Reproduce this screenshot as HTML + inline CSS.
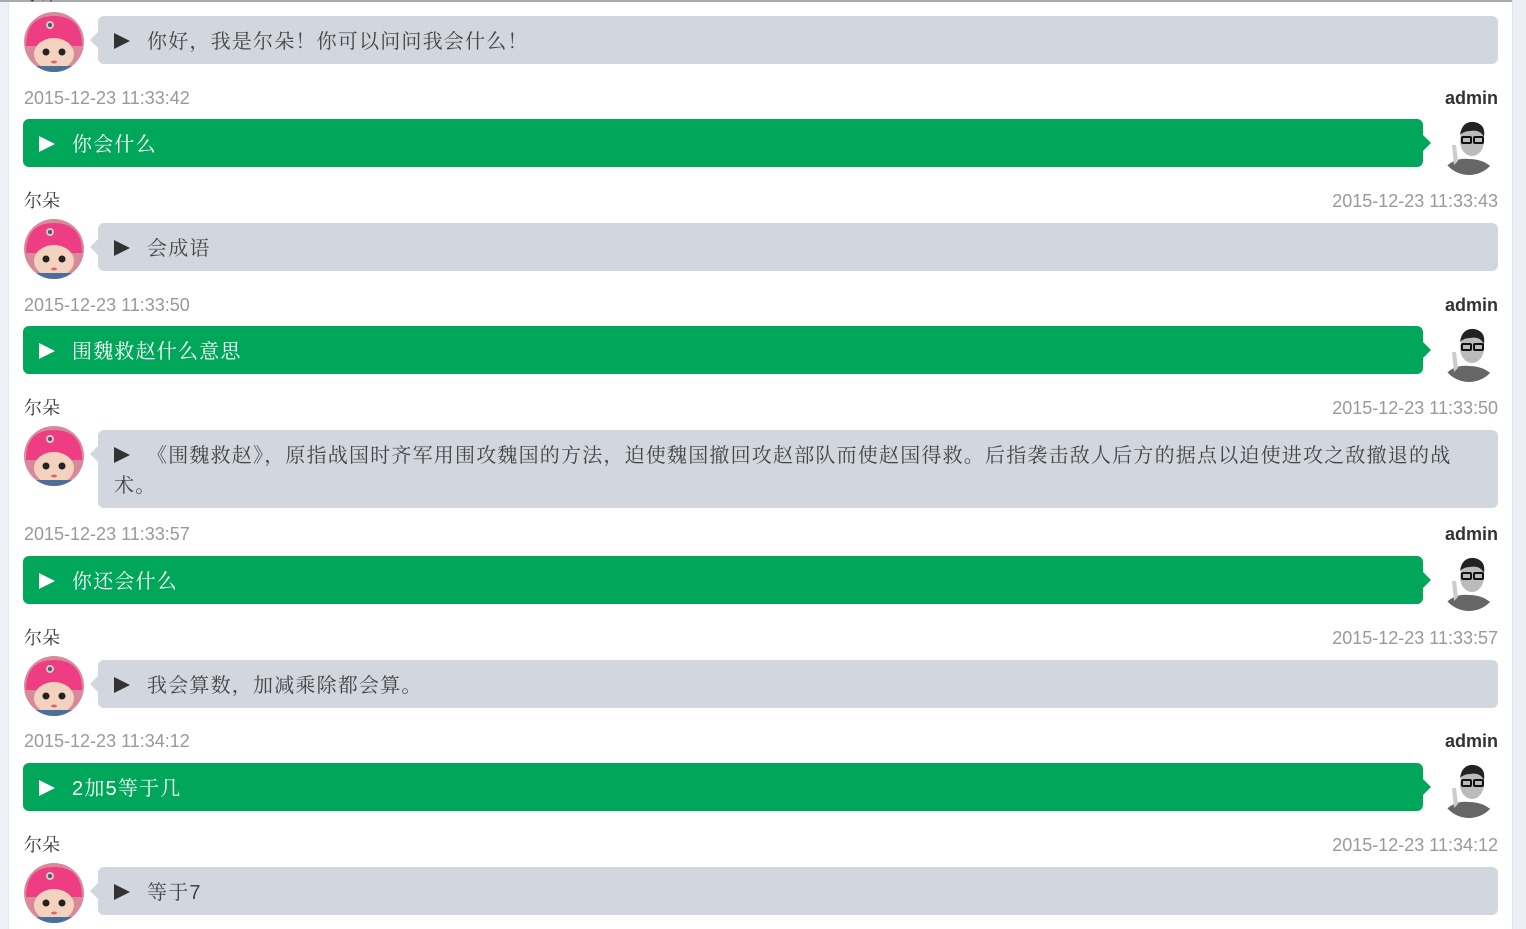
<!DOCTYPE html>
<html><head><meta charset="utf-8"><style>
*{margin:0;padding:0;box-sizing:border-box}
body{width:1526px;height:929px;overflow:hidden;background:#fff;position:relative;font-family:"Liberation Sans","Noto Serif CJK SC",serif}
.ls{position:absolute;left:0;top:0;width:9px;height:929px;background:#eef1f5;border-right:1px solid #e3e6ea}
.rs{position:absolute;left:1512px;top:0;width:14px;height:929px;background:#ecf0f5;border-left:1px solid #e0e4e8}
.top{position:absolute;left:0;top:0;width:1512px;height:2px;background:#aaa}
.name{position:absolute;left:24px;font-size:18px;color:#333;font-family:"Liberation Serif","Noto Serif CJK SC",serif;line-height:20px}
.ts{position:absolute;font-size:18px;color:#999;font-family:"Liberation Sans",sans-serif;line-height:20px}
.adm{position:absolute;right:28px;font-size:18px;color:#333;font-weight:bold;font-family:"Liberation Sans",sans-serif;line-height:20px}
.bb{position:absolute;left:98px;width:1400px;background:#d2d6de;border-radius:6px;color:#444;font-size:20px;line-height:30px;padding:11px 16px 7px;white-space:nowrap;letter-spacing:1.2px}
.bb:before{content:"";position:absolute;left:-8px;top:16px;border:8px solid transparent;border-left:0;border-right-color:#d2d6de}
.gb{position:absolute;left:23px;width:1400px;height:48px;background:#00a65a;border-radius:6px;color:#fff;font-size:20px;line-height:30px;padding:11px 16px 7px;white-space:nowrap;letter-spacing:1.2px}
.gb:after{content:"";position:absolute;right:-8px;top:16px;border:8px solid transparent;border-right:0;border-left-color:#00a65a}
.tri{display:inline-block;width:0;height:0;border-top:8px solid transparent;border-bottom:8px solid transparent;border-left:16px solid currentColor;margin-right:17px;vertical-align:-1px}
.bb .tri{color:#333}
.av{position:absolute;left:24px;width:60px;height:60px}
.aa{position:absolute;left:1440px;width:58px;height:58px}
</style></head><body>
<div class="ls"></div><div class="rs"></div><div class="top"></div>

<svg width="0" height="0" style="position:absolute"><defs>
<symbol id="bot" viewBox="0 0 60 60"><clipPath id="c1"><circle cx="30" cy="30" r="30"/></clipPath><g clip-path="url(#c1)"><rect width="60" height="60" fill="#d98a9a"/><path d="M2 34 Q2 4 30 4 Q58 4 58 34 Z" fill="#ee3d83"/><circle cx="26" cy="13" r="4" fill="#ccc"/><circle cx="26" cy="13" r="2" fill="#555"/><ellipse cx="30" cy="42" rx="20" ry="16" fill="#f3d3bf"/><circle cx="22" cy="40" r="3.5" fill="#222"/><circle cx="38" cy="40" r="3.5" fill="#222"/><ellipse cx="30" cy="50" rx="3" ry="1.5" fill="#d66"/><rect x="10" y="54" width="40" height="8" fill="#4a6f9c"/></g></symbol>
<symbol id="adm" viewBox="0 0 58 58"><clipPath id="c2"><circle cx="29" cy="29" r="29"/></clipPath><g clip-path="url(#c2)"><rect width="58" height="58" fill="#fff"/><path d="M0 58 Q10 40 29 42 Q48 42 58 58Z" fill="#666"/><ellipse cx="32" cy="24" rx="12" ry="15" fill="#bbb"/><path d="M20 18 Q22 4 34 5 Q46 7 44 20 Q40 12 30 14 Q24 14 20 18Z" fill="#222"/><rect x="22" y="20" width="9" height="6" rx="1" fill="none" stroke="#111" stroke-width="2"/><rect x="34" y="20" width="9" height="6" rx="1" fill="none" stroke="#111" stroke-width="2"/><path d="M14 48 L12 28 L16 28 L18 44Z" fill="#ccc"/></g></symbol>
</defs></svg>

<div class="name" style="top:-16px">尔朵</div>
<svg class="av" style="top:12px"><use href="#bot"/></svg>
<div class="bb" style="top:16px;height:48px"><span class="tri"></span>你好，我是尔朵！你可以问问我会什么！</div>

<div class="ts" style="left:24px;top:88px">2015-12-23 11:33:42</div><div class="adm" style="top:88px">admin</div>
<div class="gb" style="top:119px"><span class="tri"></span>你会什么</div>
<svg class="aa" style="top:117px"><use href="#adm"/></svg>

<div class="name" style="top:191px">尔朵</div><div class="ts" style="right:28px;top:191px">2015-12-23 11:33:43</div>
<svg class="av" style="top:219px"><use href="#bot"/></svg>
<div class="bb" style="top:223px;height:48px"><span class="tri"></span>会成语</div>

<div class="ts" style="left:24px;top:295px">2015-12-23 11:33:50</div><div class="adm" style="top:295px">admin</div>
<div class="gb" style="top:326px"><span class="tri"></span>围魏救赵什么意思</div>
<svg class="aa" style="top:324px"><use href="#adm"/></svg>

<div class="name" style="top:398px">尔朵</div><div class="ts" style="right:28px;top:398px">2015-12-23 11:33:50</div>
<svg class="av" style="top:426px"><use href="#bot"/></svg>
<div class="bb" style="top:430px;height:78px"><span class="tri"></span>《围魏救赵》，原指战国时齐军用围攻魏国的方法，迫使魏国撤回攻赵部队而使赵国得救。后指袭击敌人后方的据点以迫使进攻之敌撤退的战<br>术。</div>

<div class="ts" style="left:24px;top:524px">2015-12-23 11:33:57</div><div class="adm" style="top:524px">admin</div>
<div class="gb" style="top:556px"><span class="tri"></span>你还会什么</div>
<svg class="aa" style="top:553px"><use href="#adm"/></svg>

<div class="name" style="top:628px">尔朵</div><div class="ts" style="right:28px;top:628px">2015-12-23 11:33:57</div>
<svg class="av" style="top:656px"><use href="#bot"/></svg>
<div class="bb" style="top:660px;height:48px"><span class="tri"></span>我会算数，加减乘除都会算。</div>

<div class="ts" style="left:24px;top:731px">2015-12-23 11:34:12</div><div class="adm" style="top:731px">admin</div>
<div class="gb" style="top:763px"><span class="tri"></span>2加5等于几</div>
<svg class="aa" style="top:760px"><use href="#adm"/></svg>

<div class="name" style="top:835px">尔朵</div><div class="ts" style="right:28px;top:835px">2015-12-23 11:34:12</div>
<svg class="av" style="top:863px"><use href="#bot"/></svg>
<div class="bb" style="top:867px;height:48px"><span class="tri"></span>等于7</div>
</body></html>
